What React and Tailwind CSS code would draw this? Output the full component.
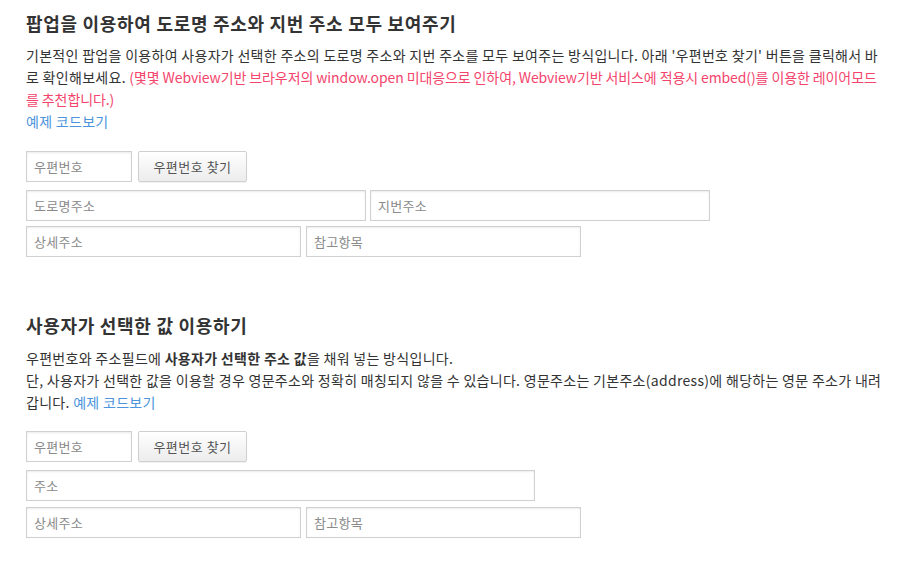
const FONT = { fontFamily: '"Noto Sans CJK KR", "Noto Sans", sans-serif' }

function Field({ placeholder, className = '' }) {
  return (
    <input
      type="text"
      placeholder={placeholder}
      className={`h-[31px] border border-[#d0d0d0] bg-white px-[7px] text-[13px] tracking-[0.3px] text-[#333] placeholder:text-[#8a8a8a] shadow-[inset_0_1px_2px_rgba(0,0,0,0.08)] outline-none ${className}`}
    />
  )
}

function ZipRow() {
  return (
    <div className="flex gap-[6px]">
      <Field placeholder="우편번호" className="w-[106px]" />
      <button className="h-[31px] w-[109px] rounded-[2px] border border-[#cfcfcf] bg-gradient-to-b from-white to-[#ececec] text-[13px] font-normal tracking-[0.5px] text-[#555] shadow-[0_1px_1px_rgba(0,0,0,0.06)]">
        우편번호 찾기
      </button>
    </div>
  )
}

function Link() {
  return <a className="text-[#4c94dc]">예제 코드보기</a>
}

export default function App() {
  return (
    <div className="min-h-[563px] bg-white px-[26px] pt-[11px] text-[#333]" style={FONT}>
      <section>
        <h2 className="text-[18px] font-bold leading-[24px] tracking-[0.7px] text-[#333]">
          팝업을 이용하여 도로명 주소와 지번 주소 모두 보여주기
        </h2>
        <p className="mt-[9px] w-[862px] break-all text-[14px] leading-[22px] tracking-[0.3px]">
          기본적인 팝업을 이용하여 사용자가 선택한 주소의 도로명 주소와 지번 주소를 모두 보여주는 방식입니다. 아래 '우편번호 찾기' 버튼을 클릭해서 바로 확인해보세요.{' '}
          <span className="tracking-[-0.1px] text-[#f4446c]">
            (몇몇 Webview기반 브라우저의 window.open 미대응으로 인하여, Webview기반 서비스에 적용시 embed()를 이용한 레이어모드를 추천합니다.)
          </span>
          <br />
          <Link />
        </p>
        <div className="mt-[19px] flex flex-col">
          <ZipRow />
          <div className="mt-[8px] flex gap-[4px]">
            <Field placeholder="도로명주소" className="w-[340px]" />
            <Field placeholder="지번주소" className="w-[340px]" />
          </div>
          <div className="mt-[5px] flex gap-[5px]">
            <Field placeholder="상세주소" className="w-[275px]" />
            <Field placeholder="참고항목" className="w-[275px]" />
          </div>
        </div>
      </section>

      <section className="mt-[56px]">
        <h2 className="text-[18px] font-bold leading-[24px] tracking-[0.7px] text-[#333]">사용자가 선택한 값 이용하기</h2>
        <p className="mt-[10px] w-[862px] break-all text-[14px] leading-[22px] tracking-[0.3px]">
          우편번호와 주소필드에 <b>사용자가 선택한 주소 값</b>을 채워 넣는 방식입니다.
          <br />
          단, 사용자가 선택한 값을 이용할 경우 영문주소와 정확히 매칭되지 않을 수 있습니다. 영문주소는 기본주소(address)에 해당하는 영문 주소가 내려갑니다. <Link />
        </p>
        <div className="mt-[18px] flex flex-col">
          <ZipRow />
          <div className="mt-[8px] flex">
            <Field placeholder="주소" className="w-[509px]" />
          </div>
          <div className="mt-[6px] flex gap-[5px]">
            <Field placeholder="상세주소" className="w-[275px]" />
            <Field placeholder="참고항목" className="w-[275px]" />
          </div>
        </div>
      </section>
    </div>
  )
}
